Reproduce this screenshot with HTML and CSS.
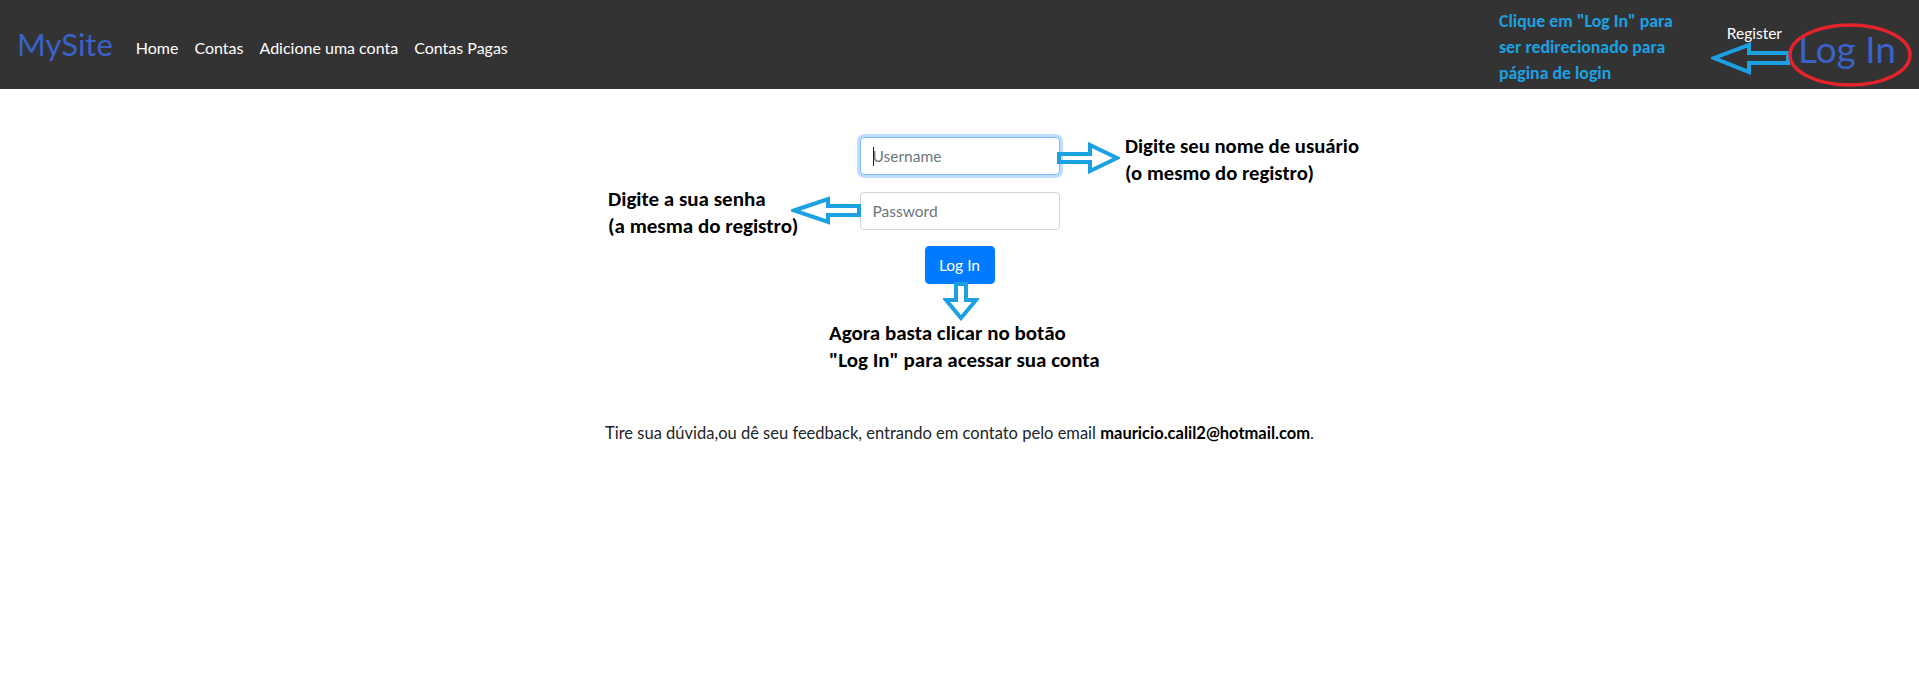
FILE: index.html
```html
<!DOCTYPE html>
<html lang="pt-BR">
<head>
<meta charset="utf-8">
<title>MySite - Log In</title>
<link rel="stylesheet" href="styles.css">
</head>
<body>
<nav class="navbar">
  <a class="brand" href="#">MySite</a>
  <ul class="nav-links">
    <li><a href="#">Home</a></li>
    <li><a href="#">Contas</a></li>
    <li><a href="#">Adicione uma conta</a></li>
    <li><a href="#">Contas Pagas</a></li>
  </ul>
  <div class="nav-right">
    <a class="register" href="#">Register</a>
    <a class="login-big" href="#">Log In</a>
  </div>
  <div class="note note-top">Clique em "Log In" para<br>ser redirecionado para<br>página de login</div>
  <svg class="mark arrow-nav" width="80" height="33" viewBox="0 0 80 33"><polygon points="3,16 38,3 38,11 77,11 77,21 38,21 38,30"/></svg>
  <svg class="mark ring" width="126" height="66" viewBox="0 0 126 66"><ellipse cx="63" cy="33" rx="60" ry="30"/></svg>
</nav>

<main class="content">
  <form class="login-form">
    <div class="field">
      <input class="input is-focused" type="text" placeholder="Username">
      <span class="caret"></span>
    </div>
    <div class="field">
      <input class="input" type="password" placeholder="Password">
    </div>
    <button class="btn" type="button">Log In</button>
  </form>
  <p class="footer-text">Tire sua dúvida,ou dê seu feedback, entrando em contato pelo email <b>mauricio.calil2@hotmail.com</b>.</p>
</main>

<div class="note note-user">Digite seu nome de usuário<br>(o mesmo do registro)</div>
<div class="note note-pass">Digite a sua senha<br>(a mesma do registro)</div>
<div class="note note-btn">Agora basta clicar no botão<br>"Log In" para acessar sua conta</div>
<svg class="mark arrow-user" width="64" height="32" viewBox="0 0 64 32"><polygon points="3,12 34,12 34,3 61,16 34,29 34,20 3,20"/></svg>
<svg class="mark arrow-pass" width="71" height="29" viewBox="0 0 71 29"><polygon points="3,14.5 37,3 37,10 68,10 68,19 37,19 37,26"/></svg>
<svg class="mark arrow-down" width="36" height="40" viewBox="0 0 36 40"><polygon points="13,3 23,3 23,19 33,19 18,37 3,19 13,19"/></svg>
</body>
</html>
```

FILE: styles.css
```css
html, body {
  margin: 0;
  padding: 0;
  background: #fff;
}
body {
  position: relative;
  font-family: Lato, "Open Sans", sans-serif;
  font-size: 16px;
  color: #212529;
}
a { text-decoration: none; }

.navbar {
  position: relative;
  height: 89px;
  background: #333333;
  display: flex;
  align-items: center;
  padding: 0 17px;
  box-sizing: border-box;
}
.brand {
  color: #3b62c9;
  font-size: 31px;
  line-height: 1;
  margin-right: 15px;
  margin-top: 0;
}
.nav-links {
  list-style: none;
  display: flex;
  margin: 0;
  padding: 0;
  margin-top: 6px;
}
.nav-links a {
  display: block;
  color: #fff;
  padding: 8px 8px;
  font-size: 16px;
}
.nav-right {
  margin-left: auto;
  display: flex;
  align-items: center;
  height: 100%;
  margin-right: 6px;
}
.register {
  color: #fff;
  font-size: 15.5px;
  align-self: flex-start;
  margin-top: 24px;
  margin-right: 16px;
}
.login-big {
  color: #3b62c9;
  font-size: 37px;
  margin-top: 8px;
}

.mark {
  position: absolute;
  fill: none;
  stroke: #1ba1e2;
  stroke-width: 4;
  stroke-linejoin: miter;
}
.arrow-nav { left: 1711px; top: 42px; }
.ring { left: 1787px; top: 22px; stroke: #e5232b; stroke-width: 3.5; }
.arrow-user { left: 1056px; top: 142px; }
.arrow-pass { left: 791px; top: 196px; }
.arrow-down { left: 943px; top: 281px; }

.note {
  position: absolute;
  font-family: Carlito, Lato, sans-serif;
  font-weight: 700;
  font-size: 21px;
  line-height: 27px;
  color: #000;
  white-space: nowrap;
}
.note-top {
  left: 1499px;
  top: 8px;
  color: #1ba1e2;
  font-size: 17.8px;
  line-height: 26px;
}
.note-user { left: 1125px; top: 133px; font-size: 20.7px; }
.note-pass { left: 608px; top: 186px; }
.note-btn { left: 829px; top: 320px; }

.content {
  display: flex;
  flex-direction: column;
  align-items: center;
  padding-top: 48px;
}
.login-form {
  display: flex;
  flex-direction: column;
  align-items: center;
  gap: 17px;
}
.field {
  position: relative;
}
.input {
  display: block;
  width: 200px;
  height: 38px;
  box-sizing: border-box;
  padding: 6px 12px;
  font-family: Lato, "Open Sans", sans-serif;
  font-size: 15.5px;
  color: #495057;
  border: 1px solid #ced4da;
  border-radius: 4px;
  background: #fff;
  outline: none;
}
.input::placeholder { color: #6c757d; }
.input.is-focused {
  border-color: #80bdff;
  box-shadow: 0 0 0 3px rgba(0, 123, 255, 0.25);
}
.caret {
  position: absolute;
  left: 13px;
  top: 10px;
  width: 1px;
  height: 19px;
  background: #222;
}
.btn {
  width: 70px;
  height: 38px;
  border: 1px solid #007bff;
  border-radius: 4px;
  background: #007bff;
  color: #fff;
  font-family: Lato, "Open Sans", sans-serif;
  font-size: 15.5px;
  padding: 0;
  margin-top: -1px;
}
.footer-text {
  margin: 137px 0 0;
  font-size: 16.5px;
  line-height: 24px;
  color: #212529;
}
.footer-text b { color: #000; font-weight: 700; }
```
